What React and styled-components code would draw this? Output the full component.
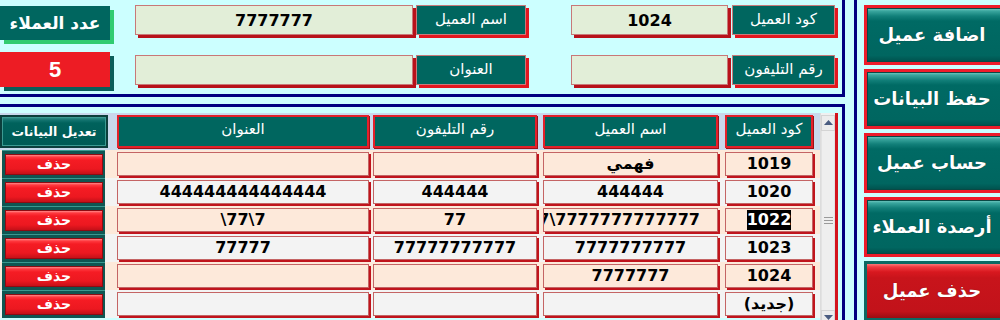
import React from 'react';
import styled, { createGlobalStyle, css } from 'styled-components';

const NAVY = '#000080';
const TEAL = '#00665f';
const RED = '#ed1c24';
const DARK_RED = '#c0141c';
const CYAN = '#ccffff';
const ARABIC = '"DejaVu Sans", "Liberation Sans", sans-serif';

const GlobalStyle = createGlobalStyle`
  html, body { margin: 0; padding: 0; background: ${CYAN}; }
  body { font-family: ${ARABIC}; overflow: hidden; }
  * { box-sizing: border-box; }
`;

const Screen = styled.div`
  display: flex;
  width: 1000px;
  height: 320px;
  overflow: hidden;
  background: ${CYAN};
`;

const Main = styled.div`
  flex: none;
  width: 845px;
  display: flex;
  flex-direction: column;
  gap: 7px;
`;

/* ---------- top form ---------- */
const TopPanel = styled.section`
  flex: none;
  height: 97px;
  border-right: 3px solid ${NAVY};
  border-bottom: 3px solid ${NAVY};
  padding-top: 5px;
  display: flex;
  align-items: flex-start;
`;

const CountBlock = styled.div`
  width: 110px;
  margin-top: 1px;
  display: flex;
  flex-direction: column;
  gap: 12px;
`;

const CountTitle = styled.div`
  height: 34px;
  background: ${TEAL};
  color: #fff;
  font-weight: bold;
  font-size: 17px;
  display: flex;
  align-items: center;
  justify-content: center;
  box-shadow: 4px 4px 0 #30cc70;
`;

const CountValue = styled.div`
  height: 35px;
  background: ${RED};
  color: #fff;
  font: bold 22px "Liberation Sans", sans-serif;
  display: flex;
  align-items: center;
  justify-content: center;
  box-shadow: 4px 4px 0 #0b5e5a;
`;

const FieldGroup = styled.div`
  display: grid;
  grid-template-columns: ${(p) => p.$input}px ${(p) => p.$label}px;
  grid-auto-rows: 30px;
  column-gap: ${(p) => p.$gap}px;
  row-gap: 20px;
  margin-left: ${(p) => p.$offset}px;
`;

const FieldInput = styled.div`
  background: #e2eed8;
  border: 1px solid #c87878;
  box-shadow: 3px 3px 0 #b8121a;
  display: flex;
  align-items: center;
  justify-content: center;
  font: bold 16px "DejaVu Sans", sans-serif;
  color: #000;
`;

const FieldLabel = styled.div`
  background: ${TEAL};
  border: 1px solid #c87a7a;
  box-shadow: 3px 3px 0 #e3161f;
  color: #fff;
  font-size: 15px;
  padding-bottom: 3px;
  display: flex;
  align-items: center;
  justify-content: center;
  direction: rtl;
`;

/* ---------- data grid ---------- */
const GridPanel = styled.section`
  flex: 1;
  min-height: 0;
  border-top: 3px solid ${NAVY};
  border-right: 3px solid ${NAVY};
  padding-top: 6px;
  display: flex;
`;

const GridFrame = styled.div`
  width: 838px;
  height: 240px;
  flex: none;
  display: flex;
  border-right: 3px solid #d3141d;
`;

const DataArea = styled.div`
  width: 820px;
  display: flex;
  flex-direction: column;
`;

const HeaderRow = styled.div`
  height: 37px;
  padding-top: 2px;
  display: flex;
  align-items: flex-start;
  background: #c9d8ec;
`;

const EditHeader = styled.div`
  width: 108px;
  height: 33px;
  background: linear-gradient(#3a968e 0, #137470 3px, #00625c 6px, #005a55 100%);
  border: 2px solid #0c3e3c;
  box-shadow: inset 0 0 0 1px #3c9a92;
  color: #fff;
  font-weight: bold;
  font-size: 12.5px;
  display: flex;
  align-items: center;
  justify-content: center;
  direction: rtl;
`;

const HeaderCell = styled.div`
  width: ${(p) => p.$w}px;
  margin-left: ${(p) => p.$gap}px;
  height: 33px;
  background: ${TEAL};
  border: 2px solid #e4202a;
  box-shadow: 1px 1px 0 #9c1016;
  color: #fff;
  font-size: 15px;
  display: flex;
  align-items: flex-start;
  padding-top: 3px;
  justify-content: center;
  direction: rtl;
`;

const DataRow = styled.div`
  height: 28px;
  flex: none;
  display: flex;
  align-items: flex-start;
  background: ${(p) => (p.$alt ? '#f3f3f3' : '#fde9da')};
`;

const EditCell = styled.div`
  width: 108px;
  height: 28px;
  padding: 0 3px 0 2px;
  display: flex;
`;

const EditFrame = styled.div`
  flex: 1;
  background: #0f5652;
  border-top: 1px solid #3a9890;
  padding: 3px 2px 0 3px;
`;

const DeleteButton = styled.button`
  display: block;
  width: 100%;
  height: 21px;
  padding: 0 0 2px;
  border: 1px solid #8e0b12;
  background: linear-gradient(#ff8a8a 0, #ff3a40 2px, #f51c24 5px, #ec1820 14px, #c41018 100%);
  color: #fff;
  font: bold 14px ${ARABIC};
  direction: rtl;
`;

const Cell = styled.div`
  width: ${(p) => p.$w}px;
  margin-left: ${(p) => p.$gap}px;
  height: 24px;
  margin-top: 2px;
  border: 1px solid #c46464;
  box-shadow: 2px 2px 0 ${DARK_RED};
  display: flex;
  align-items: center;
  justify-content: ${(p) => (p.$clip ? 'flex-end' : 'center')};
  padding-right: ${(p) => (p.$clip ? 17 : 0)}px;
  overflow: hidden;
  white-space: nowrap;
  font: bold 16px "DejaVu Sans", sans-serif;
  color: #000;
`;

const CellText = styled.span`
  flex: none;
  direction: ${(p) => (p.$rtl ? 'rtl' : 'ltr')};
  unicode-bidi: isolate;
  background: ${(p) => (p.$selected ? '#000' : 'transparent')};
  color: ${(p) => (p.$selected ? '#fff' : '#000')};
  line-height: 20px;
`;

/* ---------- scrollbar ---------- */
const Scrollbar = styled.div`
  width: 15px;
  flex: none;
  padding-top: 2px;
  display: flex;
  flex-direction: column;
  background: #f0f0f0;
  border-left: 1px solid #dcdcdc;
`;

const ScrollButton = styled.div`
  height: 16px;
  flex: none;
  display: flex;
  align-items: center;
  justify-content: center;
  background: #ececec;
  border: 1px solid #d4d4d4;
`;

const ScrollThumb = styled.div`
  height: 179px;
  flex: none;
  display: flex;
  align-items: center;
  justify-content: center;
  background: #eeeeee;
  border-left: 1px solid #e2e2e2;
  border-right: 1px solid #e2e2e2;
`;

const Arrow = ({ down }) => (
  <svg width="9" height="6" viewBox="0 0 9 6">
    <polygon points={down ? '0,0 9,0 4.5,5' : '4.5,0 9,5 0,5'} fill="#4a5c80" />
  </svg>
);

const Grip = () => (
  <svg width="9" height="7" viewBox="0 0 9 7">
    <rect x="0" y="0" width="9" height="1" fill="#9a9a9a" />
    <rect x="0" y="3" width="9" height="1" fill="#9a9a9a" />
    <rect x="0" y="6" width="9" height="1" fill="#9a9a9a" />
  </svg>
);

/* ---------- action buttons ---------- */
const ActionColumn = styled.nav`
  flex: none;
  margin-left: 9px;
  border-left: 3px solid ${NAVY};
  padding: 5px 0 0 7px;
  display: flex;
  flex-direction: column;
  gap: 4px;
`;

const ActionButton = styled.button`
  flex: none;
  width: 140px;
  height: 60px;
  padding: 0 4px 2px 0;
  color: #fff;
  font: bold 18px ${ARABIC};
  direction: rtl;
  text-shadow: 0 0 1px rgba(0, 0, 0, 0.5);
  ${(p) =>
    p.$danger
      ? css`
          border: 3px solid #0c6a64;
          background: linear-gradient(#ff7878 0, #f03a40 3px, #d8181f 8px, #c8141b 14px, #c2121a 88%, #9a0c12 100%);
        `
      : css`
          border: 3px solid #ee1c2a;
          box-shadow: inset 0 0 0 1px #0a4844;
          background: linear-gradient(#7fd4cc 0, #3aa69e 3px, #12807a 8px, #006a64 13px, #006660 88%, #00504c 100%);
        `}
`;

const columns = [
  { key: 'address', title: 'العنوان', w: 252, gap: 9 },
  { key: 'phone', title: 'رقم التليفون', w: 164, gap: 4 },
  { key: 'name', title: 'اسم العميل', w: 175, gap: 6 },
  { key: 'code', title: 'كود العميل', w: 88, gap: 7 },
];

const rows = [
  { code: '1019', name: 'فهمي', phone: '', address: '' },
  { code: '1020', name: '444444', phone: '444444', address: '444444444444444' },
  { code: '1022', name: '7\\7777777777777', phone: '77', address: '\\77\\7', selected: true, clipName: true },
  { code: '1023', name: '7777777777', phone: '77777777777', address: '77777' },
  { code: '1024', name: '7777777', phone: '', address: '' },
  { code: '(جديد)', name: '', phone: '', address: '' },
];

const actions = ['اضافة عميل', 'حفظ البيانات', 'حساب عميل', 'أرصدة العملاء'];

export default function App() {
  return (
    <>
      <GlobalStyle />
      <Screen>
        <Main>
          <TopPanel>
            <CountBlock>
              <CountTitle>عدد العملاء</CountTitle>
              <CountValue>5</CountValue>
            </CountBlock>
            <FieldGroup $input={278} $label={110} $gap={3} $offset={25}>
              <FieldInput>7777777</FieldInput>
              <FieldLabel>اسم العميل</FieldLabel>
              <FieldInput />
              <FieldLabel>العنوان</FieldLabel>
            </FieldGroup>
            <FieldGroup $input={157} $label={103} $gap={4} $offset={45}>
              <FieldInput>1024</FieldInput>
              <FieldLabel>كود العميل</FieldLabel>
              <FieldInput />
              <FieldLabel>رقم التليفون</FieldLabel>
            </FieldGroup>
          </TopPanel>

          <GridPanel>
            <GridFrame>
              <DataArea>
                <HeaderRow>
                  <EditHeader>تعديل البيانات</EditHeader>
                  {columns.map((c) => (
                    <HeaderCell key={c.key} $w={c.w} $gap={c.gap}>
                      {c.title}
                    </HeaderCell>
                  ))}
                </HeaderRow>
                {rows.map((r, i) => (
                  <DataRow key={i} $alt={i % 2 === 1}>
                    <EditCell>
                      <EditFrame>
                        <DeleteButton>حذف</DeleteButton>
                      </EditFrame>
                    </EditCell>
                    {columns.map((c) => (
                      <Cell
                        key={c.key}
                        $w={c.w}
                        $gap={c.gap}
                        $clip={c.key === 'name' && r.clipName}
                      >
                        <CellText
                          $rtl={/[\u0600-\u06FF]/.test(r[c.key])}
                          $selected={c.key === 'code' && r.selected}
                        >
                          {r[c.key]}
                        </CellText>
                      </Cell>
                    ))}
                  </DataRow>
                ))}
              </DataArea>
              <Scrollbar>
                <ScrollButton>
                  <Arrow />
                </ScrollButton>
                <ScrollThumb>
                  <Grip />
                </ScrollThumb>
                <ScrollButton>
                  <Arrow down />
                </ScrollButton>
              </Scrollbar>
            </GridFrame>
          </GridPanel>
        </Main>

        <ActionColumn>
          {actions.map((a) => (
            <ActionButton key={a}>{a}</ActionButton>
          ))}
          <ActionButton $danger>حذف عميل</ActionButton>
        </ActionColumn>
      </Screen>
    </>
  );
}
